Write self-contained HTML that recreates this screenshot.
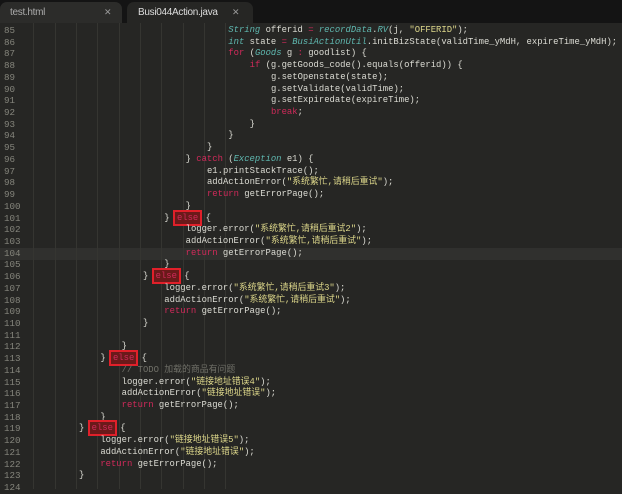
<!DOCTYPE html>
<html><head><meta charset="utf-8"><style>
body{margin:0;width:622px;height:489px;overflow:hidden;background:#262624;position:relative;font-family:"Liberation Mono","Noto Sans CJK SC",monospace;}
.tabbar{position:absolute;left:0;top:0;width:622px;height:23px;background:#141414;}
.tab{position:absolute;top:2px;height:21px;border-radius:7px 7px 0 0;font-family:"Liberation Sans",sans-serif;font-size:10px;line-height:21px;letter-spacing:-0.3px}
.t1{left:0;width:122px;background:#2c2c2a;color:#aaa;}
.t2{left:127px;width:126px;background:#262624;color:#ddd;}
.x{position:absolute;top:0;color:#999;font-size:9px}
.l{position:absolute;font-size:8.9px;line-height:11.7px;height:11.7px;white-space:pre;color:#dcdcd4;}
.n{position:absolute;left:4px;width:20px;font-size:9.2px;line-height:11.7px;color:#85857c;}
.k{color:#d02a5a}.s{color:#dcd68a}.t{color:#5fb8b0;font-style:italic}.c{color:#707068}
.e{color:#d02a5a;background:#6a1a1a;outline:2px solid #e0202a;padding:1px 2px}
.g{position:absolute;top:23px;height:466px;width:1px;background:#353531}
.hl{position:absolute;left:0;width:622px;height:11.7px;background:#30302e}
</style></head><body>
<div class="tabbar">
<div class="tab t1"><span style="position:absolute;left:10px">test.html</span><span class="x" style="left:104px">✕</span></div>
<div class="tab t2"><span style="position:absolute;left:11px">Busi044Action.java</span><span class="x" style="left:105px">✕</span></div>
</div>
<div class="hl" style="top:248px"></div>
<div id="c"></div>
<script>
var L=[
[10,'<span class="t">String</span> offerid <span class="k">=</span> <span class="t">recordData</span>.<span class="t">RV</span>(j, <span class="s">"OFFERID"</span>);'],
[10,'<span class="t">int</span> state <span class="k">=</span> <span class="t">BusiActionUtil</span>.initBizState(validTime_yMdH, expireTime_yMdH);'],
[10,'<span class="k">for</span> (<span class="t">Goods</span> g <span class="k">:</span> goodlist) {'],
[11,'<span class="k">if</span> (g.getGoods_code().equals(offerid)) {'],
[12,'g.setOpenstate(state);'],
[12,'g.setValidate(validTime);'],
[12,'g.setExpiredate(expireTime);'],
[12,'<span class="k">break</span>;'],
[11,'}'],[10,'}'],[9,'}'],
[8,'} <span class="k">catch</span> (<span class="t">Exception</span> e1) {'],
[9,'e1.printStackTrace();'],
[9,'addActionError(<span class="s">"系统繁忙,请稍后重试"</span>);'],
[9,'<span class="k">return</span> getErrorPage();'],
[8,'}'],
[7,'} <span class="e">else</span> {'],
[8,'logger.error(<span class="s">"系统繁忙,请稍后重试2"</span>);'],
[8,'addActionError(<span class="s">"系统繁忙,请稍后重试"</span>);'],
[8,'<span class="k">return</span> getErrorPage();'],
[7,'}'],
[6,'} <span class="e">else</span> {'],
[7,'logger.error(<span class="s">"系统繁忙,请稍后重试3"</span>);'],
[7,'addActionError(<span class="s">"系统繁忙,请稍后重试"</span>);'],
[7,'<span class="k">return</span> getErrorPage();'],
[6,'}'],[0,''],[5,'}'],
[4,'} <span class="e">else</span> {'],
[5,'<span class="c">// TODO 加载的商品有问题</span>'],
[5,'logger.error(<span class="s">"链接地址错误4"</span>);'],
[5,'addActionError(<span class="s">"链接地址错误"</span>);'],
[5,'<span class="k">return</span> getErrorPage();'],
[4,'}'],
[3,'} <span class="e">else</span> {'],
[4,'logger.error(<span class="s">"链接地址错误5"</span>);'],
[4,'addActionError(<span class="s">"链接地址错误"</span>);'],
[4,'<span class="k">return</span> getErrorPage();'],
[3,'}'],[0,'']];
var h='';
for(var g=1;g<=10;g++)h+='<div class="g" style="left:'+(12+g*21.33)+'px"></div>';
for(var i=0;i<L.length;i++){var y=25+i*11.72;
h+='<div class="n" style="top:'+y+'px">'+(85+i)+'</div>';
h+='<div class="l" style="top:'+y+'px;left:'+(15+L[i][0]*21.33)+'px">'+L[i][1]+'</div>';}
document.getElementById('c').innerHTML=h;
</script>
</body></html>
